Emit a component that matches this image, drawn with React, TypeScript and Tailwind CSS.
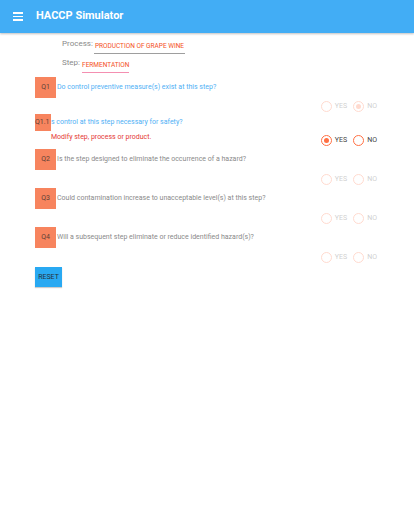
import { ReactNode } from 'react';

type Answer = 'yes' | 'no' | null;

interface QuestionProps {
  code: string;
  text: string;
  active?: boolean;
  answer: Answer;
  faded?: boolean;
  narrow?: boolean;
  note?: string;
  boxHeight?: string;
  rowHeight?: string;
}

function Radio({ checked, label }: { checked: boolean; label: string }) {
  return (
    <div className="flex items-center">
      <span className="flex h-[11px] w-[11px] items-center justify-center rounded-full border-[1.5px] border-[#ff7043]">
        {checked && <span className="h-[5px] w-[5px] rounded-full bg-[#ff7043]" />}
      </span>
      <span className="ml-[3px] text-[7px] text-[#424242]">{label}</span>
    </div>
  );
}

function RadioRow({ answer, faded, height, children }: { answer: Answer; faded?: boolean; height: string; children?: ReactNode }) {
  return (
    <div className={`relative flex items-center justify-end pr-[37px] ${height}`}>
      {children}
      <div className={`flex items-center gap-[6px] ${faded ? 'opacity-25' : ''}`}>
        <Radio checked={answer === 'yes'} label="YES" />
        <Radio checked={answer === 'no'} label="NO" />
      </div>
    </div>
  );
}

function Question({ code, text, active, answer, faded = true, narrow, note, boxHeight = 'h-[21px]', rowHeight = 'h-[18px]' }: QuestionProps) {
  return (
    <div>
      <div className={`flex items-center ${boxHeight}`}>
        <div
          className={`relative z-10 flex h-full shrink-0 items-center bg-[#f7845e] text-[7px] text-[#5d4037] ${
            narrow ? 'w-[16px] justify-start overflow-visible whitespace-nowrap' : 'w-[21px] justify-center'
          }`}
        >
          {code}
        </div>
        <p className={`text-[7px] ${narrow ? '-ml-[2px]' : 'ml-[1px]'} ${active ? 'text-[#4fb0f5]' : 'text-[#8a8a8a]'}`}>
          {text}
        </p>
      </div>
      <RadioRow answer={answer} faded={faded} height={rowHeight}>
        {note && <p className="absolute left-[16px] top-[1px] text-[7px] text-[#e53935]">{note}</p>}
      </RadioRow>
    </div>
  );
}

export default function App() {
  return (
    <div className="min-h-[512px] w-[414px] bg-white" style={{ fontFamily: 'Roboto, "Liberation Sans", sans-serif' }}>
      <header className="flex h-[33px] items-center bg-[#42adf5] shadow-[0_1px_2px_rgba(0,0,0,0.25)]">
        <div className="ml-[13px] flex w-[10px] flex-col gap-[2px]">
          <span className="h-[1.5px] bg-white" />
          <span className="h-[1.5px] bg-white" />
          <span className="h-[1.5px] bg-white" />
        </div>
        <h1 className="ml-[13px] text-[11px] font-bold text-white">HACCP Simulator</h1>
      </header>

      <div className="pl-[35px]">
        <div className="ml-[27px] h-[44px] pt-[4px]">
          <div className="flex h-[20px] items-start">
            <span className="mt-[1px] text-[8px] text-[#8a8a8a]">Process:</span>
            <span className="ml-[1px] mt-[5px] border-b border-[#9e9e9e] pb-[1px] pl-[1px] pr-[1px] text-[6.5px] text-[#f4511e]">
              PRODUCTION OF GRAPE WINE
            </span>
          </div>
          <div className="flex items-start">
            <span className="text-[8px] text-[#8a8a8a]">Step:</span>
            <span className="ml-[2px] mt-[4px] border-b-[1.5px] border-[#f48fb1] pb-[1px] text-[6.5px] text-[#f4511e]">
              FERMENTATION
            </span>
          </div>
        </div>

        <Question code="Q1" text="Do control preventive measure(s) exist at this step?" active answer="no" rowHeight="h-[16px]" />
        <Question
          code="Q1.1"
          text="Is control at this step necessary for safety?"
          active
          narrow
          answer="yes"
          faded={false}
          note="Modify step, process or product."
          boxHeight="h-[17px]"
        />
        <Question code="Q2" text="Is the step designed to eliminate the occurrence of a hazard?" answer={null} />
        <Question code="Q3" text="Could contamination increase to unacceptable level(s) at this step?" answer={null} />
        <Question code="Q4" text="Will a subsequent step eliminate or reduce identified hazard(s)?" answer={null} />

        <button
          type="button"
          className="mt-[1px] block h-[20px] w-[27px] bg-[#29a9f2] text-[7px] text-[#263238] shadow-[0_1px_1px_rgba(0,0,0,0.2)]"
        >
          RESET
        </button>
      </div>
    </div>
  );
}
